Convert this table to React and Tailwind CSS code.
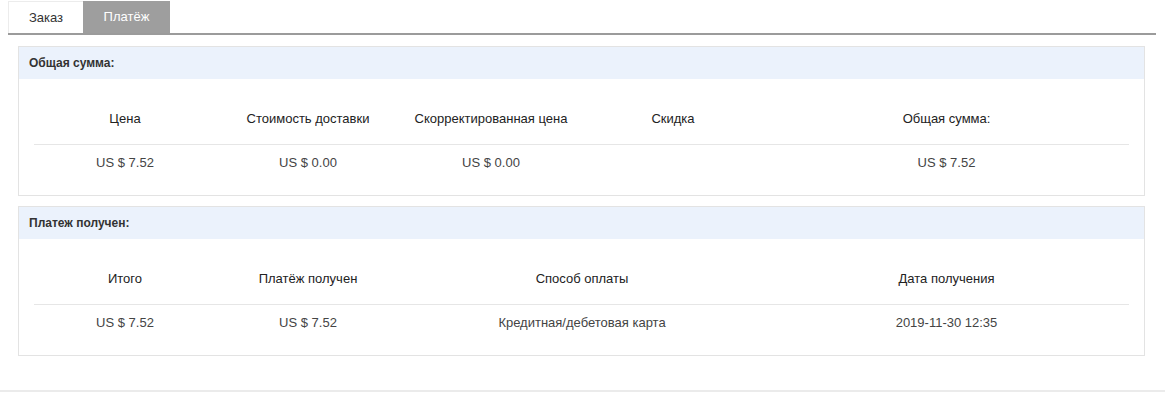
export default function App() {
  const font = { fontFamily: '"Liberation Sans", Arial, sans-serif' };
  const grid = "grid grid-cols-[182px_184px_182px_182px_1fr]";
  return (
    <div className="w-[1165px] h-[393px] bg-white text-[13px] text-[#333]" style={font}>
      <div className="pl-2 pr-[9px] pt-px">
        <div className="flex h-[34px] border-b-2 border-[#9b9b9b]">
          <div className="w-[75px] flex items-center justify-center border-l border-t border-[#ececec] text-[13px] text-[#333]">Заказ</div>
          <div className="w-[87px] flex items-center justify-center bg-[#9e9e9e] text-white text-[13px]">Платёж</div>
        </div>
      </div>
      <div className="pl-[18px] pr-[20px] pt-[11px] flex flex-col gap-[10px]">
        <div className="border border-[#e3e3e3]">
          <div className="h-[32px] bg-[#ebf2fc] flex items-center pl-[10px] font-bold text-[12px] text-[#333]">Общая сумма:</div>
          <div className="px-[15px] pt-[15px] pb-[14px]">
            <div className={grid + " h-[51px] items-center text-center border-b border-[#e6e6e6] text-[#222]"}>
              <div>Цена</div>
              <div>Стоимость доставки</div>
              <div>Скорректированная цена</div>
              <div>Скидка</div>
              <div>Общая сумма:</div>
            </div>
            <div className={grid + " h-[36px] items-center text-center text-[#444]"}>
              <div>US $ 7.52</div>
              <div>US $ 0.00</div>
              <div>US $ 0.00</div>
              <div></div>
              <div>US $ 7.52</div>
            </div>
          </div>
        </div>
        <div className="border border-[#e3e3e3]">
          <div className="h-[32px] bg-[#ebf2fc] flex items-center pl-[10px] font-bold text-[12px] text-[#333]">Платеж получен:</div>
          <div className="px-[15px] pt-[15px] pb-[14px]">
            <div className={grid + " h-[51px] items-center text-center border-b border-[#e6e6e6] text-[#222]"}>
              <div>Итого</div>
              <div>Платёж получен</div>
              <div className="col-span-2">Способ оплаты</div>
              <div>Дата получения</div>
            </div>
            <div className={grid + " h-[36px] items-center text-center text-[#444]"}>
              <div>US $ 7.52</div>
              <div>US $ 7.52</div>
              <div className="col-span-2">Кредитная/дебетовая карта</div>
              <div>2019-11-30 12:35</div>
            </div>
          </div>
        </div>
      </div>
      <div className="mt-[34px] border-t-2 border-[#ebebeb]"></div>
    </div>
  );
}
